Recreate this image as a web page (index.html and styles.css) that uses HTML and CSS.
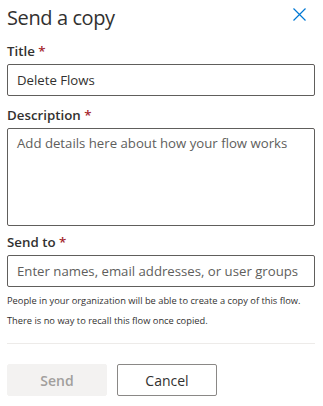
FILE: index.html
```html
<!DOCTYPE html>
<html lang="en">
<head>
  <meta charset="UTF-8">
  <title>Send a copy</title>
  <link rel="stylesheet" href="styles.css">
</head>
<body>
  <div class="panel">
    <div class="panel-header">
      <h1>Send a copy</h1>
      <button class="close-btn" aria-label="Close">
        <svg width="13" height="13" viewBox="0 0 13 13">
          <path d="M0.5 0.5 L12.5 12.5 M12.5 0.5 L0.5 12.5" stroke="#0078d4" stroke-width="1.2" fill="none"/>
        </svg>
      </button>
    </div>

    <label class="field-label">Title <span class="req">*</span></label>
    <input class="field-input title-input" type="text" value="Delete Flows">

    <label class="field-label">Description <span class="req">*</span></label>
    <textarea class="field-area" placeholder="Add details here about how your flow works"></textarea>

    <label class="field-label">Send to <span class="req">*</span></label>
    <input class="field-input" type="text" placeholder="Enter names, email addresses, or user groups">
    <p class="hint first">People in your organization will be able to create a copy of this flow.</p>
    <p class="hint">There is no way to recall this flow once copied.</p>

    <div class="panel-footer">
      <button class="btn btn-primary" disabled>Send</button>
      <button class="btn btn-default">Cancel</button>
    </div>
  </div>
</body>
</html>
```

FILE: styles.css
```css
body {
  margin: 0;
  font-family: "Open Sans", "Noto Sans", Arial, sans-serif;
  background-color: #fff;
  color: #323130;
}
.panel {
  padding: 0 8px 0 7px;
  display: flex;
  flex-direction: column;
}
.panel-header {
  display: flex;
  justify-content: space-between;
  align-items: center;
  height: 35px;
  margin-bottom: 4px;
}
.panel-header h1 {
  margin: 0;
  font-size: 20px;
  font-weight: 400;
  letter-spacing: -0.4px;
}
.close-btn {
  background: none;
  border: none;
  padding: 0;
  margin: -6px 9px 0 0;
  display: flex;
  cursor: pointer;
}
.field-label {
  font-size: 13.3px;
  font-weight: 600;
  line-height: 20px;
  padding: 2px 0;
  margin-bottom: 1px;
}
.req {
  color: #a4262c;
}
.field-input,
.field-area {
  box-sizing: border-box;
  width: 100%;
  border: 1px solid #605e5c;
  border-radius: 2px;
  font-family: inherit;
  font-size: 13.2px;
  color: #323130;
  padding: 0 9px;
  margin: 0 0 5px;
}
.field-input {
  height: 32px;
}
.title-input {
  margin-bottom: 7px;
}
.field-area {
  height: 98px;
  padding-top: 5px;
  margin-bottom: 4px;
  resize: none;
}
.field-input::placeholder,
.field-area::placeholder {
  color: #605e5c;
}
.hint {
  margin: 0;
  font-size: 9.3px;
  line-height: 20px;
  color: #323130;
  white-space: nowrap;
}
.hint.first {
  margin-top: -1px;
}
.panel-footer {
  border-top: 1px solid #edebe9;
  margin-top: 12px;
  padding-top: 20px;
  display: flex;
  gap: 10px;
}
.btn {
  width: 100px;
  height: 32px;
  font-family: inherit;
  font-size: 14px;
  font-weight: 600;
  border-radius: 2px;
  cursor: pointer;
}
.btn-primary {
  background-color: #f3f2f1;
  color: #a19f9d;
  border: 1px solid #f3f2f1;
}
.btn-default {
  background-color: #fff;
  color: #323130;
  border: 1px solid #8a8886;
  font-weight: 400;
}
```
